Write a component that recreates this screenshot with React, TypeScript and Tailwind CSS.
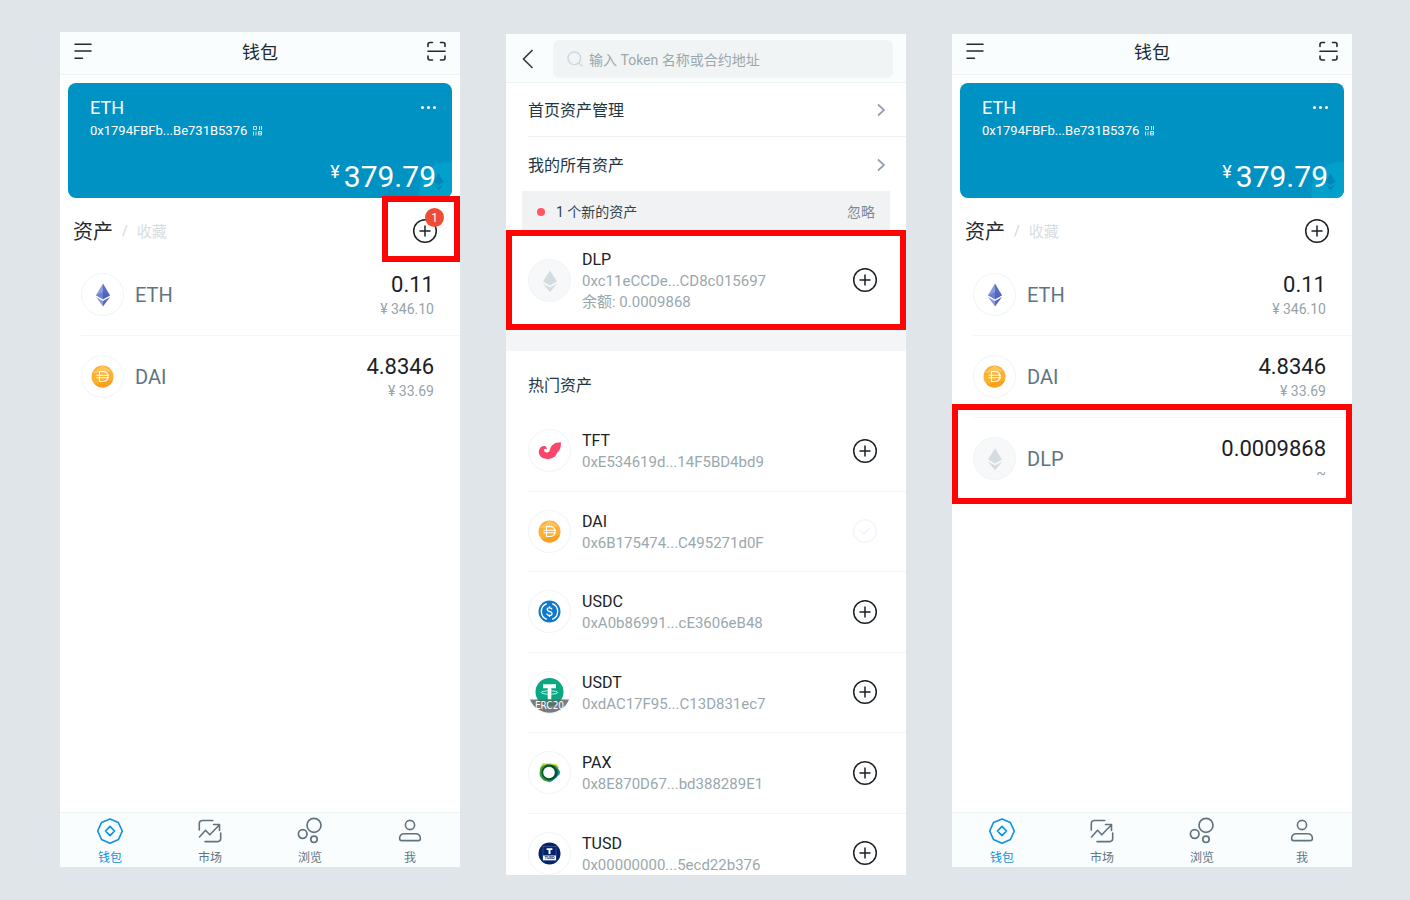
import type { ReactNode } from "react";

type Asset = { symbol: string; amount: string; value: string; icon: ReactNode };
type Token = { symbol: string; address: string; icon: ReactNode; added?: boolean };

/* ---------- token logos (43 x 43 badges) ---------- */

function Badge({ children, muted = false }: { children: ReactNode; muted?: boolean }) {
  return (
    <svg viewBox="0 0 43 43" className="size-[43px] shrink-0" aria-hidden="true">
      <circle cx="21.5" cy="21.5" r="21" fill={muted ? "#f7f8fa" : "#ffffff"} stroke="#eff4f5" />
      {children}
    </svg>
  );
}

function EthIcon() {
  return (
    <Badge>
      <path d="M22 10.500 15 22.300 22 26.300Z" fill="#8a9be0" />
      <path d="M22 10.500 29 22.300 22 26.300Z" fill="#5a6dc4" />
      <path d="M22 19 15 22.300 22 26.300Z" fill="#6d80d2" />
      <path d="M22 19 29 22.300 22 26.300Z" fill="#5063bd" />
      <path d="M15 24 22 28 22 33.500Z" fill="#8a9be0" />
      <path d="M29 24 22 28 22 33.500Z" fill="#5668c2" />
    </Badge>
  );
}

function MutedEthIcon() {
  return (
    <Badge muted>
      <path d="M22 11.500 15 22.600 22 26.500 29 22.600Z" fill="#d3dde1" />
      <path d="M14.800 24.500 22 28.500 29.200 24.500 22 33.300Z" fill="#d3dde1" />
    </Badge>
  );
}

function DaiIcon() {
  return (
    <Badge>
      <circle cx="21.500" cy="21.500" r="11" fill="#fcb132" />
      <path d="M11 18 21.500 10.500 31 16 24 18Z" fill="#fdc35c" />
      <path d="M13.500 29 32 25A11 11 0 0 1 13.500 29Z" fill="#fb9f1d" />
      <path
        d="M18.500 16.500h3c3.800 0 5.500 2.200 5.500 5s-1.700 5-5.500 5h-3zM15.500 20.300H28M15.500 22.700H28"
        fill="none"
        stroke="#fff"
        strokeWidth="1.100"
      />
    </Badge>
  );
}

function TftIcon() {
  return (
    <Badge>
      <path
        d="M32.800 13.200C27 13.200 22.800 16 22 20.500c-.4 2.200-2 3.300-3.900 2.900-1.800-.4-2.600-1.900-1.900-3.100.6-.9 1.700-.7 2.100.1 1.200-1.700-.2-3.700-2.500-3.500-3.300.2-5.300 3.300-4.900 6.900.5 3.900 3.900 6.200 8.800 6.200 5.300 0 8.600-2.700 9.400-6.400 2.700-2 4.200-5.200 3.700-10.400Z"
        fill="#fa466a"
      />
    </Badge>
  );
}

function UsdcIcon() {
  return (
    <Badge>
      <circle cx="21.500" cy="21.500" r="11" fill="#1178ca" />
      <path
        d="M18.800 13.700a8.300 8.300 0 0 0 0 15.600M24.200 13.700a8.300 8.300 0 0 1 0 15.600"
        fill="none"
        stroke="#fff"
        strokeWidth="1.400"
      />
      <path
        d="M24 19.400c-.2-1-1.100-1.600-2.500-1.600s-2.400.7-2.400 1.800c0 2.600 5 1.200 5 3.900 0 1.100-1 1.900-2.600 1.900s-2.600-.8-2.700-1.900M21.500 16.200v1.600M21.500 25.400V27"
        fill="none"
        stroke="#fff"
        strokeWidth="1.300"
      />
    </Badge>
  );
}

function UsdtIcon() {
  return (
    <Badge>
      <circle cx="21.500" cy="21" r="14" fill="#0aa781" />
      <path d="M15 13.300h13v4h-4.700V29h-3.600V17.300H15z" fill="#fff" />
      <ellipse cx="21.500" cy="21.500" rx="8.200" ry="1.700" fill="none" stroke="#fff" strokeWidth=".8" />
      <path d="M2 28.500h39A21 21 0 0 1 2 28.500Z" fill="#777a80" />
      <path d="M9.800 28.500h23.400A14 14 0 0 1 9.800 28.500Z" fill="#43756a" />
      <text
        x="21.500"
        y="37.800"
        textAnchor="middle"
        fill="#fff"
        fontSize="10"
        fontWeight="500"
        fontFamily="'DejaVu Sans Condensed', Roboto, sans-serif"
      >
        ERC20
      </text>
    </Badge>
  );
}

function PaxIcon() {
  return (
    <Badge>
      <path d="M14 12.500Q15 11.800 16.500 12.200L25 12.600Q29.500 12.800 30.500 16L29 24 15 26 12 18Z" fill="#d5df3c" />
      <path d="M29 16 32 20.500Q32.600 21.800 31.500 23.500L24 30.300Q21.500 32 19.500 30.800L15 27Z" fill="#1a9ed8" />
      <path
        d="M12.600 16.500Q15 13.500 19 13.200L27 14.300Q30 15.500 30.800 20.500 30.500 25 26.500 28 23 30.700 18 30.200 14.500 29.500 12.200 25.500 10.800 22.500 12.600 16.500Z"
        fill="#3d9b3b"
      />
      <path d="M29 16.500Q31 19 30.700 21.500 29.500 26.500 24 29.300L27.500 22Z" fill="#0b7d86" />
      <circle cx="21.500" cy="21.500" r="7.900" fill="#075336" />
      <circle cx="21" cy="21.500" r="5.800" fill="#fff" />
    </Badge>
  );
}

function TusdIcon() {
  return (
    <Badge>
      <circle cx="21.500" cy="21.500" r="11" fill="#04246a" />
      <rect x="15" y="14.500" width="13" height="13.500" fill="none" stroke="#5a72a8" strokeWidth=".5" />
      <path d="M18.600 16.200h5.800V18h-1.900v3.900h-2V18h-1.900z" fill="#fff" />
      <rect x="15" y="23.500" width="13" height="4.800" fill="#fff" />
      <text
        x="21.500"
        y="27.400"
        textAnchor="middle"
        fill="#04246a"
        fontSize="4"
        fontWeight="700"
        fontFamily="Roboto, sans-serif"
      >
        TUSD
      </text>
    </Badge>
  );
}

/* ---------- interface icons ---------- */

function MenuIcon() {
  return (
    <svg viewBox="0 0 20 20" className="size-5" fill="none" stroke="#24292d" strokeWidth="1.500" strokeLinecap="round">
      <path d="M2 3.300h16M2 10h16M2 17.300h7.500" />
    </svg>
  );
}

function ScanIcon() {
  return (
    <svg viewBox="0 0 20 20" className="size-5" fill="none" stroke="#24292d" strokeWidth="1.600" strokeLinecap="round">
      <path d="M1 5.500V3.500Q1 1.500 3 1.500H5.500M13.500 1.500H16Q18 1.500 18 3.500V5.500M18 15v2q0 2-2 2H13.500M5.500 19H3Q1 19 1 17V15M1 10.300h17" />
    </svg>
  );
}

function PlusCircle() {
  return (
    <svg viewBox="0 0 26 26" className="size-[26px]" fill="none" stroke="#1b2125" strokeWidth="1.500">
      <circle cx="13" cy="13" r="11.300" />
      <path d="M13 8v10M8 13h10" strokeLinecap="round" />
    </svg>
  );
}

function CheckCircle() {
  return (
    <svg viewBox="0 0 26 26" className="size-[26px]" fill="none" stroke="#f2f5fa" strokeWidth="1.500">
      <circle cx="13" cy="13" r="11.300" />
      <path d="m9 13.300 2.800 2.700 5.400-5.500" strokeLinecap="round" />
    </svg>
  );
}

function ChevronRight() {
  return (
    <svg viewBox="0 0 10 14" className="h-3.5 w-2.5" fill="none" stroke="#939fae" strokeWidth="1.700">
      <path d="m2 1.500 6 5.500-6 5.500" />
    </svg>
  );
}

function QrIcon() {
  return (
    <svg viewBox="0 0 10 10" className="size-2.5" fill="none" stroke="#c5e6f2" strokeWidth="1">
      <path d="M.5.500h3v3h-3zM6.500 0v4M8.500 0v4M.5 5.500v4M3 5.500v4M5.500 5.500h3v3.500H5.500zM5.500 7.300h3" />
    </svg>
  );
}

function WalletTabIcon() {
  return (
    <svg viewBox="0 0 28 28" className="size-7" fill="none" stroke="#1092df" strokeWidth="1.700" strokeLinejoin="round">
      <path d="M14 2 22.300 5.500 26.300 14 22.500 22.500 14 26.200 5.500 22.500 1.700 14 5.500 5.500Z" />
      <path d="m14 9.300 4.500 4.700-4.500 4.700L9.500 14Z" />
    </svg>
  );
}

function MarketTabIcon() {
  return (
    <svg viewBox="0 0 28 28" className="size-7" fill="none" stroke="#61747e" strokeWidth="1.600" strokeLinejoin="round" strokeLinecap="round">
      <path d="M3.300 13V6.500q0-3 3-3h10.500M9 24.600h12.700q3 0 3-3V16" />
      <path d="m3.500 20 6-6.700 4.300 4.500L23.300 8M17.500 7.500h6v6" />
    </svg>
  );
}

function BrowseTabIcon() {
  return (
    <svg viewBox="0 0 28 28" className="size-7" fill="none" stroke="#61747e" strokeWidth="1.700">
      <circle cx="18" cy="8.300" r="7" />
      <circle cx="6.700" cy="17" r="4.300" />
      <circle cx="18" cy="22.300" r="3.200" />
    </svg>
  );
}

function ProfileTabIcon() {
  return (
    <svg viewBox="0 0 28 28" className="size-7" fill="none" stroke="#61747e" strokeWidth="1.600">
      <circle cx="14" cy="8" r="4.600" />
      <path d="M8.500 16.700h11q4.900 0 4.900 4.800 0 2.100-2.100 2.100H5.700q-2.100 0-2.100-2.100 0-4.800 4.900-4.800Z" />
    </svg>
  );
}

/* ---------- data ---------- */

const eth: Asset = { symbol: "ETH", amount: "0.11", value: "¥ 346.10", icon: <EthIcon /> };
const dai: Asset = { symbol: "DAI", amount: "4.8346", value: "¥ 33.69", icon: <DaiIcon /> };
const dlp: Asset = { symbol: "DLP", amount: "0.0009868", value: "~", icon: <MutedEthIcon /> };

const popular: Token[] = [
  { symbol: "TFT", address: "0xE534619d...14F5BD4bd9", icon: <TftIcon /> },
  { symbol: "DAI", address: "0x6B175474...C495271d0F", icon: <DaiIcon />, added: true },
  { symbol: "USDC", address: "0xA0b86991...cE3606eB48", icon: <UsdcIcon /> },
  { symbol: "USDT", address: "0xdAC17F95...C13D831ec7", icon: <UsdtIcon /> },
  { symbol: "PAX", address: "0x8E870D67...bd388289E1", icon: <PaxIcon /> },
  { symbol: "TUSD", address: "0x00000000...5ecd22b376", icon: <TusdIcon /> },
];

const tabs = [
  { label: "钱包", icon: <WalletTabIcon />, active: true },
  { label: "市场", icon: <MarketTabIcon />, active: false },
  { label: "浏览", icon: <BrowseTabIcon />, active: false },
  { label: "我", icon: <ProfileTabIcon />, active: false },
];

/* ---------- wallet screen ---------- */

function BalanceCard() {
  return (
    <section className="relative mx-2 mt-2 overflow-hidden rounded-lg bg-[#0092c3] pt-3 pr-4 pl-[22px] text-white">
      <svg viewBox="0 0 34 38" className="absolute right-0 bottom-0 h-[38px] w-[34px]" aria-hidden="true">
        <circle cx="30" cy="31" r="29" fill="#00a0cb" />
        <path d="M20.500 13 15.500 22 20.500 25 25.500 22ZM15.500 24 20.500 27 25.500 24 20.500 30.500Z" fill="#0087b8" />
      </svg>
      <div className="flex items-center justify-between">
        <h2 className="pt-px text-lg leading-6">ETH</h2>
        <button type="button" aria-label="更多" className="flex h-6 items-center gap-[3px]">
          <span className="size-[3px] rounded-full bg-white" />
          <span className="size-[3px] rounded-full bg-white" />
          <span className="size-[3px] rounded-full bg-white" />
        </button>
      </div>
      <p className="flex items-center gap-1.5 text-[13px] leading-[22px]">
        0x1794FBFb...Be731B5376
        <QrIcon />
      </p>
      <p className="relative mt-4 flex items-start justify-end gap-1 pb-0.5">
        <span className="pt-0.5 text-lg leading-6">¥</span>
        <span className="text-[30px] leading-[38px]">379.79</span>
      </p>
    </section>
  );
}

function AssetRow({ asset, last, highlighted }: { asset: Asset; last: boolean; highlighted: boolean }) {
  return (
    <li className="relative pl-[21px]">
      <div className={`flex h-[82px] items-center gap-[11px] border-b pr-[26px] ${last ? "border-transparent" : "border-[#f3f6f6]"}`}>
        {asset.icon}
        <span className="flex-1 text-xl leading-6 text-[#61747e]">{asset.symbol}</span>
        <span className="flex flex-col pt-[3px] text-right">
          <span className="text-[22px] leading-[26px] text-[#1b2125]">{asset.amount}</span>
          <span className="text-sm leading-[22px] text-[#95a3aa]">{asset.value}</span>
        </span>
      </div>
      {highlighted && <span className="pointer-events-none absolute inset-x-0 -top-3.5 -bottom-1 border-[6px] border-[#fe0505]" />}
    </li>
  );
}

function WalletScreen({
  assets,
  badge,
  highlight,
  frame,
  headerHeight,
}: {
  assets: Asset[];
  badge?: number;
  highlight?: string;
  frame: string;
  headerHeight: string;
}) {
  return (
    <main className={`flex flex-col bg-white ${frame}`}>
      <header className={`flex items-end border-b border-[#edf2f3] bg-[#f9fdfe] px-[13px] pb-2 ${headerHeight}`}>
        <div className="flex h-[30px] flex-1 items-center justify-between">
          <button type="button" aria-label="菜单">
            <MenuIcon />
          </button>
          <h1 className="pt-[3px] text-lg leading-6 text-[#24292d]">钱包</h1>
          <button type="button" aria-label="扫一扫">
            <ScanIcon />
          </button>
        </div>
      </header>
      <BalanceCard />
      <div className="relative flex h-14 items-center px-[13px] pt-2.5 pr-[22px]">
        <h2 className="pt-0.5 text-xl leading-7 text-[#24292d]">资产</h2>
        <span className="mx-[9px] text-sm text-[#ccd5da]">/</span>
        <button type="button" className="pt-0.5 text-[15px] leading-6 text-[#d6dee2]">
          收藏
        </button>
        <button type="button" aria-label="添加资产" className="relative ml-auto">
          <PlusCircle />
          {badge !== undefined && (
            <span className="absolute -top-2.5 -right-1.5 flex size-[19px] items-center justify-center rounded-full bg-[#ee4c33] text-xs text-white">
              {badge}
            </span>
          )}
        </button>
        {badge !== undefined && (
          <span className="pointer-events-none absolute -top-0.5 right-0 h-[66px] w-[78px] border-[6px] border-[#fe0505]" />
        )}
      </div>
      <ul className="flex-1">
        {assets.map((a, i) => (
          <AssetRow key={a.symbol} asset={a} last={i === assets.length - 1} highlighted={a.symbol === highlight} />
        ))}
      </ul>
      <nav className="grid grid-cols-4 border-t border-[#edf2f3] bg-[#f9fdfe] pt-1">
        {tabs.map((t) => (
          <a
            key={t.label}
            href="#"
            className={`flex flex-col items-center text-xs leading-[18px] ${t.active ? "text-[#1092df]" : "text-[#61747e]"}`}
          >
            {t.icon}
            <span className="pt-1">{t.label}</span>
          </a>
        ))}
      </nav>
    </main>
  );
}

/* ---------- token management screen ---------- */

function TokenDetails({ token, balance }: { token: Token; balance?: string }) {
  return (
    <>
      {token.icon}
      <div className="min-w-0 flex-1 pt-0.5 text-[15px] leading-[22px] text-[#9aa8ad]">
        <h3 className="text-base leading-[21px] text-[#1b2125]">{token.symbol}</h3>
        <p>{token.address}</p>
        {balance && <p className="leading-[21px]">余额: {balance}</p>}
      </div>
      <button type="button" disabled={token.added} aria-label={`添加 ${token.symbol}`}>
        {token.added ? <CheckCircle /> : <PlusCircle />}
      </button>
    </>
  );
}

function TokenScreen() {
  return (
    <main className="mt-0.5 flex max-h-[calc(100vh-59px)] flex-col overflow-hidden bg-white">
      <header className="flex shrink-0 items-center gap-4 border-b border-[#edf2f3] bg-[#f9fdfe] pt-1.5 pr-[13px] pb-1 pl-[15px]">
        <button type="button" aria-label="返回">
          <svg viewBox="0 0 16 20" className="h-5 w-4" fill="none" stroke="#31373b" strokeWidth="1.600">
            <path d="M11.500 1 2.500 10l9 9" />
          </svg>
        </button>
        <label className="flex h-[38px] flex-1 items-center gap-1.5 rounded-md bg-[#f1f4f5] pl-3.5">
          <svg viewBox="0 0 16 16" className="size-4" fill="none" stroke="#ccd7e1" strokeWidth="1.400" aria-hidden="true">
            <circle cx="7.300" cy="7.300" r="6.300" />
            <path d="m12 12 3 3" strokeLinecap="round" />
          </svg>
          <input
            type="text"
            aria-label="搜索"
            placeholder="输入 Token 名称或合约地址"
            className="min-w-0 flex-1 bg-transparent pt-px text-sm text-[#24292d] outline-none placeholder:text-[#9aa8ad]"
          />
        </label>
      </header>
      <div className="shrink-0 pl-[22px] text-base text-[#1c3643]">
        <a href="#" className="flex h-[54px] items-center justify-between border-b border-[#edf2f3] pr-5">
          <span className="pt-0.5">首页资产管理</span>
          <ChevronRight />
        </a>
        <a href="#" className="flex h-[54px] items-center justify-between pt-0.5 pr-5">
          <span className="pt-0.5">我的所有资产</span>
          <ChevronRight />
        </a>
      </div>
      <div className="mr-4 ml-4 flex h-[39px] shrink-0 items-center bg-[#f1f2f4] px-[15px] pt-0.5 text-sm text-[#33434b]">
        <span className="mr-[11px] size-2 rounded-full bg-[#ff565f]" />
        <span className="flex-1">1 个新的资产</span>
        <button type="button" className="text-[#7d8a90]">
          忽略
        </button>
      </div>
      <div className="flex h-[100px] shrink-0 items-center gap-[11px] border-[6px] border-[#fe0505] pr-[22px] pl-4">
        <TokenDetails
          token={{ symbol: "DLP", address: "0xc11eCCDe...CD8c015697", icon: <MutedEthIcon /> }}
          balance="0.0009868"
        />
      </div>
      <div className="h-[21px] shrink-0 bg-[#f4f5f7]" />
      <h2 className="shrink-0 px-[22px] pt-[23px] pb-[13px] text-base text-[#1c3643]">热门资产</h2>
      <ul className="grid min-h-[483px] shrink-0 auto-rows-fr pl-[22px]">
        {popular.map((t) => (
          <li key={t.symbol} className="flex items-center gap-[11px] border-b border-[#f1f5f5] pr-7">
            <TokenDetails token={t} />
          </li>
        ))}
      </ul>
    </main>
  );
}

export default function App() {
  return (
    <div className="grid min-h-screen grid-cols-3 items-start gap-[46px] bg-[#e0e5e9] pt-8 pr-[58px] pl-[60px] font-[Roboto,'Noto_Sans_CJK_SC',sans-serif]">
      <WalletScreen assets={[eth, dai]} badge={1} frame="min-h-[calc(100vh-65px)]" headerHeight="h-[43px]" />
      <TokenScreen />
      <WalletScreen
        assets={[eth, dai, dlp]}
        highlight="DLP"
        frame="mt-0.5 min-h-[calc(100vh-67px)]"
        headerHeight="h-[41px]"
      />
    </div>
  );
}
